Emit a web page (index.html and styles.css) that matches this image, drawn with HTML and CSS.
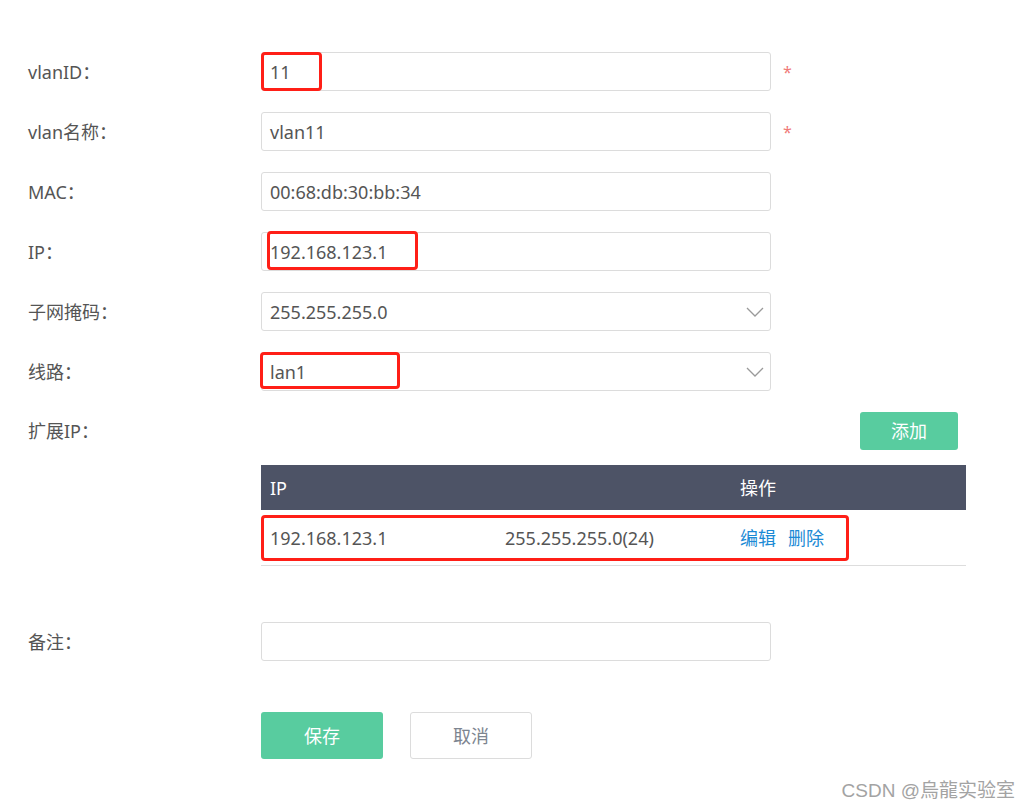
FILE: index.html
```html
<!DOCTYPE html>
<html lang="zh-CN">
<head>
<meta charset="utf-8">
<title>vlan</title>
<link rel="stylesheet" href="styles.css">
</head>
<body>
<div class="page">
  <form class="form">
    <div class="row">
      <label class="label">vlanID：</label>
      <div class="field"><div class="input">11</div><span class="mark m1"></span></div>
      <span class="req">*</span>
    </div>
    <div class="row">
      <label class="label">vlan名称：</label>
      <div class="field"><div class="input">vlan11</div></div>
      <span class="req">*</span>
    </div>
    <div class="row">
      <label class="label">MAC：</label>
      <div class="field"><div class="input">00:68:db:30:bb:34</div></div>
    </div>
    <div class="row">
      <label class="label">IP：</label>
      <div class="field"><div class="input">192.168.123.1</div><span class="mark m2"></span></div>
    </div>
    <div class="row">
      <label class="label">子网掩码：</label>
      <div class="field"><div class="input select">255.255.255.0<svg class="chev" width="18" height="10" viewBox="0 0 18 10"><polyline points="1,1 9,9 17,1" fill="none" stroke="#9a9a9a" stroke-width="1.3"/></svg></div></div>
    </div>
    <div class="row">
      <label class="label">线路：</label>
      <div class="field"><div class="input select">lan1<svg class="chev" width="18" height="10" viewBox="0 0 18 10"><polyline points="1,1 9,9 17,1" fill="none" stroke="#9a9a9a" stroke-width="1.3"/></svg></div><span class="mark m3"></span></div>
    </div>
    <div class="ext">
      <label class="label ext-label">扩展IP：</label>
      <div class="ext-body">
        <div class="toolbar"><button type="button" class="btn btn-add">添加</button></div>
        <div class="table">
          <div class="thead">
            <div class="cell">IP</div>
            <div class="cell"></div>
            <div class="cell">操作</div>
          </div>
          <div class="trow">
            <div class="cell">192.168.123.1</div>
            <div class="cell">255.255.255.0(24)</div>
            <div class="cell ops"><a class="link">编辑</a><a class="link">删除</a></div>
            <span class="mark m4"></span>
          </div>
        </div>
      </div>
    </div>
    <div class="row remark">
      <label class="label">备注：</label>
      <div class="field"><div class="input"></div></div>
    </div>
    <div class="actions">
      <button type="button" class="btn btn-save">保存</button>
      <button type="button" class="btn btn-cancel">取消</button>
    </div>
  </form>
  <div class="watermark">CSDN @烏龍实验室</div>
</div>
</body>
</html>
```

FILE: styles.css
```css
* { box-sizing: border-box; }
html, body { margin: 0; padding: 0; background: #fff; }
body {
  font-family: "Noto Sans", "Noto Sans CJK SC", sans-serif;
  font-size: 18px;
  color: #555;
}
.page {
  position: relative;
  width: 1029px;
  height: 810px;
  overflow: hidden;
}
.form {
  padding: 52px 0 0 28px;
}
.row {
  display: flex;
  align-items: center;
  height: 39px;
  margin-bottom: 21px;
}
.label {
  width: 233px;
  flex: none;
  color: #555;
  line-height: 24px;
}
.field {
  position: relative;
  width: 510px;
  flex: none;
}
.input {
  height: 39px;
  border: 1px solid #dcdcdc;
  border-radius: 3px;
  padding: 0 8px;
  display: flex;
  align-items: center;
  line-height: 24px;
  color: #555;
}
.select { justify-content: space-between; padding-right: 6px; }
.chev { display: block; }
.req {
  color: #f07a7a;
  margin-left: 12px;
  font-size: 16px;
}
.mark {
  position: absolute;
  border: 3px solid #ff1f17;
  border-radius: 4px;
  pointer-events: none;
}
.m1 { left: 0; top: 0; width: 61px; height: 39px; }
.m2 { left: 6px; top: -1px; width: 151px; height: 39px; }
.m3 { left: -1px; top: 0; width: 140px; height: 37px; }
.m4 { left: 0; top: 5px; width: 588px; height: 46px; }

.ext {
  display: flex;
  align-items: flex-start;
}
.ext-label { margin-top: 7px; }
.ext-body { width: 705px; flex: none; }
.toolbar {
  display: flex;
  justify-content: flex-end;
  padding-right: 8px;
}
.btn {
  font-family: inherit;
  font-size: 18px;
  border-radius: 3px;
  cursor: pointer;
  line-height: 24px;
  padding: 0;
}
.btn-add {
  width: 98px;
  height: 38px;
  background: #58cc9f;
  border: none;
  color: #fff;
}
.table { margin-top: 15px; }
.thead {
  display: grid;
  grid-template-columns: 235px 235px 235px;
  height: 45px;
  background: #4d5366;
  color: #fff;
  align-items: center;
}
.trow {
  position: relative;
  display: grid;
  grid-template-columns: 235px 235px 235px;
  height: 56px;
  align-items: center;
  border-bottom: 1px solid #dddddd;
  color: #555;
}
.cell { padding-left: 9px; line-height: 24px; }
.ops { display: flex; gap: 12px; }
.link { color: #1b8ad5; text-decoration: none; }

.remark { margin-top: 56px; }
.actions {
  display: flex;
  gap: 27px;
  margin: 51px 0 0 233px;
}
.btn-save {
  width: 122px;
  height: 47px;
  background: #58cc9f;
  border: none;
  color: #fff;
}
.btn-cancel {
  width: 122px;
  height: 47px;
  background: #fff;
  border: 1px solid #dcdcdc;
  color: #7d8590;
}
.watermark {
  position: absolute;
  right: 14px;
  bottom: 7px;
  font-family: "Liberation Sans", "Noto Sans CJK SC", sans-serif;
  font-size: 19px;
  color: #a3a3a3;
  line-height: 24px;
}
```
